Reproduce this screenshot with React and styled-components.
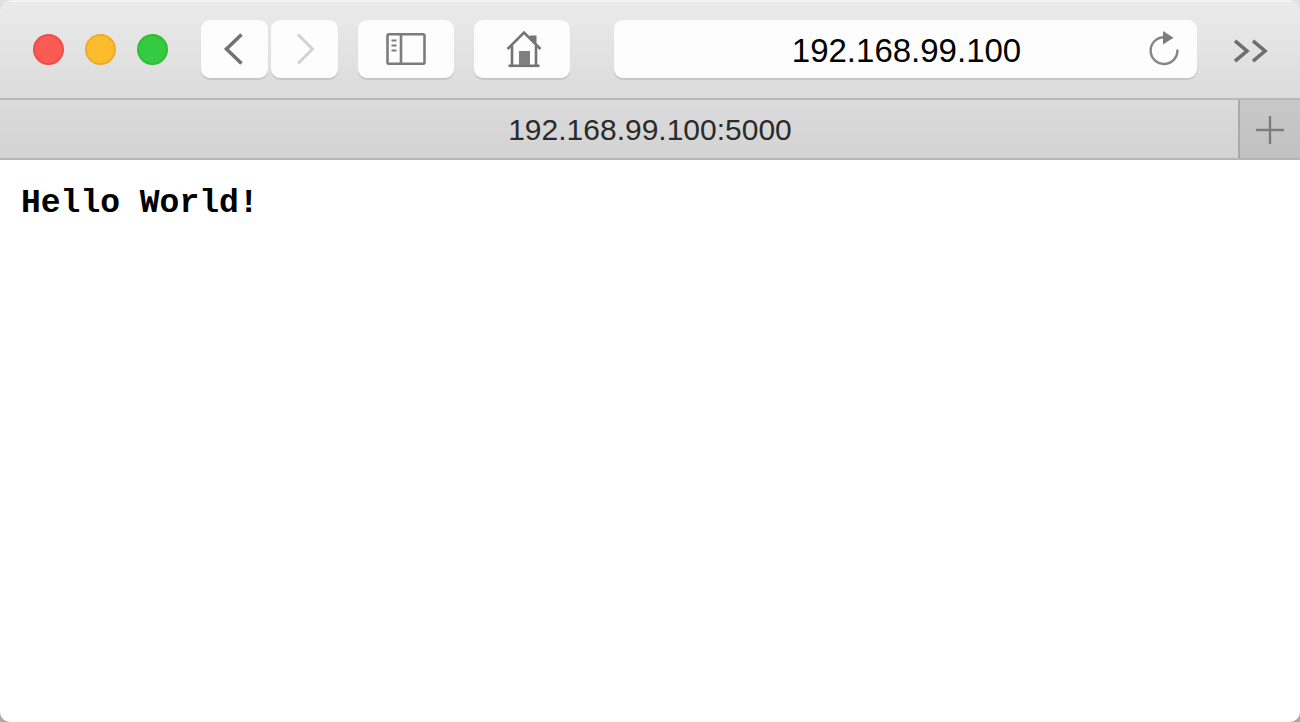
import React, { useState } from 'react'
import styled, { createGlobalStyle } from 'styled-components'

const GlobalStyle = createGlobalStyle`
  * {
    box-sizing: border-box;
  }

  body {
    margin: 0;
    background: linear-gradient(#e2e2e2, #a8a8a8);
    font-family: "Liberation Sans", Arial, sans-serif;
  }

  button, input {
    margin: 0;
    padding: 0;
    border: 0;
    font-family: inherit;
  }
`

const BackIcon = () => (
  <svg width="24" height="32" viewBox="0 0 24 32" fill="none" stroke="#727272" strokeWidth="3.6" aria-hidden="true">
    <path d="M18.5 1.5 3.5 16l15 14.5" />
  </svg>
)

const ForwardIcon = () => (
  <svg width="20" height="32" viewBox="0 0 20 32" fill="none" stroke="#d2d2d2" strokeWidth="3" aria-hidden="true">
    <path d="M3 1.5 17.5 16 3 30.5" />
  </svg>
)

const SidebarIcon = () => (
  <svg width="40" height="32" viewBox="0 0 40 32" fill="none" stroke="#7c7c7c" aria-hidden="true">
    <rect x="1.5" y="1.3" width="37" height="29.4" rx="1.5" strokeWidth="2.6" />
    <path d="M15 1v30" strokeWidth="2.6" />
    <path d="M5.5 7.5h5M5.5 12.5h5M5.5 17.5h5" strokeWidth="1.8" />
  </svg>
)

const HomeIcon = () => (
  <svg width="40" height="38" viewBox="-4 0 40 38" fill="none" stroke="#747474" strokeWidth="2.6" aria-hidden="true">
    <path d="M1.5 19 18 2.5 34.5 19" />
    <path d="M6 15.5V35M30 15.5V35" />
    <path d="M2.5 35.8h31" />
    <path d="M24 8V5.5h6.5V15z" fill="#747474" stroke="none" />
    <path d="M13 21h11v14H13z" fill="#808080" stroke="none" />
  </svg>
)

const ReloadIcon = () => (
  <svg width="30" height="36" viewBox="0 0 30 36" fill="none" stroke="#858585" strokeWidth="2.4" aria-hidden="true">
    <path d="M28.4 18.5A13.4 13.4 0 1 1 15 6.2" />
    <path d="M14 0v13.5L24.5 6.8z" fill="#7c7c7c" stroke="none" />
  </svg>
)

const MoreIcon = () => (
  <svg width="36" height="28" viewBox="0 -4 36 28" fill="none" stroke="#6e6e6e" strokeWidth="3.6" aria-hidden="true">
    <path d="M2 1.8 14 12 2 22.2M20 1.8 32 12l-12 10.2" />
  </svg>
)

const PlusIcon = () => (
  <svg width="28" height="28" viewBox="0 0 28 28" stroke="#7c7c7c" strokeWidth="2.4" aria-hidden="true">
    <path d="M14 0v28M0 14h28" />
  </svg>
)

const App = () => {
  const [address, setAddress] = useState('192.168.99.100')

  return (
    <>
      <GlobalStyle />
      <Window>
        <Toolbar>
          <Lights>
            <Light type="button" aria-label="Close" $fill="#fc5b54" $edge="#ee4d46" />
            <Light type="button" aria-label="Minimize" $fill="#fdbc2e" $edge="#eeab28" />
            <Light type="button" aria-label="Zoom" $fill="#35ca3f" $edge="#2fbd38" />
          </Lights>
          <History>
            <ToolButton type="button" aria-label="Back" $width="67px"><BackIcon /></ToolButton>
            <ToolButton type="button" aria-label="Forward" $width="67px"><ForwardIcon /></ToolButton>
          </History>
          <Tools>
            <ToolButton type="button" aria-label="Sidebar" $width="96px"><SidebarIcon /></ToolButton>
            <ToolButton type="button" aria-label="Home" $width="96px"><HomeIcon /></ToolButton>
          </Tools>
          <AddressBar>
            <AddressInput
              type="text"
              aria-label="Address"
              value={address}
              onChange={(event) => setAddress(event.target.value)}
            />
            <PlainButton type="button" aria-label="Reload"><ReloadIcon /></PlainButton>
          </AddressBar>
          <PlainButton type="button" aria-label="More"><MoreIcon /></PlainButton>
        </Toolbar>
        <TabBar>
          <Tab type="button">192.168.99.100:5000</Tab>
          <NewTab type="button" aria-label="New tab"><PlusIcon /></NewTab>
        </TabBar>
        <Page>
          <Output>Hello World!</Output>
        </Page>
      </Window>
    </>
  )
}

export default App

const Window = styled.div`
  display: flex;
  flex-direction: column;
  min-height: 100vh;
  overflow: hidden;
  border-radius: 14px 14px 10px 10px;
  background: #fff;
`

const Toolbar = styled.header`
  display: flex;
  align-items: center;
  padding: 18px 31px 20px 33px;
  border-top: 2px solid #f4f4f4;
  background: linear-gradient(#ebebeb, #dbdbdb);
`

const Lights = styled.div`
  display: flex;
  gap: 21px;
  margin-right: 33px;
`

const Light = styled.button`
  width: 31px;
  height: 31px;
  border: 2px solid ${(props) => props.$edge};
  border-radius: 50%;
  background: ${(props) => props.$fill};
`

const History = styled.div`
  display: flex;
  gap: 3px;
  margin-right: 20px;
`

const Tools = styled.div`
  display: flex;
  gap: 20px;
  margin-right: 44px;
`

const ToolButton = styled.button`
  display: flex;
  align-items: center;
  justify-content: center;
  width: ${(props) => props.$width};
  height: 58px;
  border-radius: 9px;
  background: #fdfdfd;
  box-shadow: 0 2px 1px #c6c6c6;
`

const AddressBar = styled.div`
  display: flex;
  flex: 1;
  align-items: center;
  min-width: 0;
  height: 58px;
  margin-right: 36px;
  padding: 0 18px 0 50px;
  border-radius: 9px;
  background: #fdfdfd;
  box-shadow: 0 2px 1px #c6c6c6;
`

const AddressInput = styled.input`
  flex: 1;
  min-width: 0;
  height: 58px;
  padding-top: 4px;
  background: transparent;
  color: #000;
  font-size: 33px;
  text-align: center;
  outline: none;
`

const PlainButton = styled.button`
  display: flex;
  background: transparent;
`

const TabBar = styled.nav`
  display: flex;
  height: 62px;
  border-top: 2px solid #b9b9b9;
  border-bottom: 2px solid #b5b5b5;
  background: linear-gradient(#dbdbdb, #d3d3d3);
`

const Tab = styled.button`
  flex: 1;
  padding: 2px 0 0 62px;
  background: transparent;
  color: #2b2b2b;
  font-size: 30px;
`

const NewTab = styled.button`
  display: flex;
  align-items: center;
  justify-content: center;
  width: 62px;
  padding-top: 2px;
  border-left: 2px solid #a9a9a9;
  background: linear-gradient(#c8c8c8, #c1c1c1);
`

const Page = styled.main`
  flex: 1;
  padding: 24px 21px;
`

const Output = styled.pre`
  margin: 0;
  color: #000;
  font-family: "Liberation Mono", "Courier New", monospace;
  font-size: 33px;
  font-weight: bold;
  line-height: 40px;
`
